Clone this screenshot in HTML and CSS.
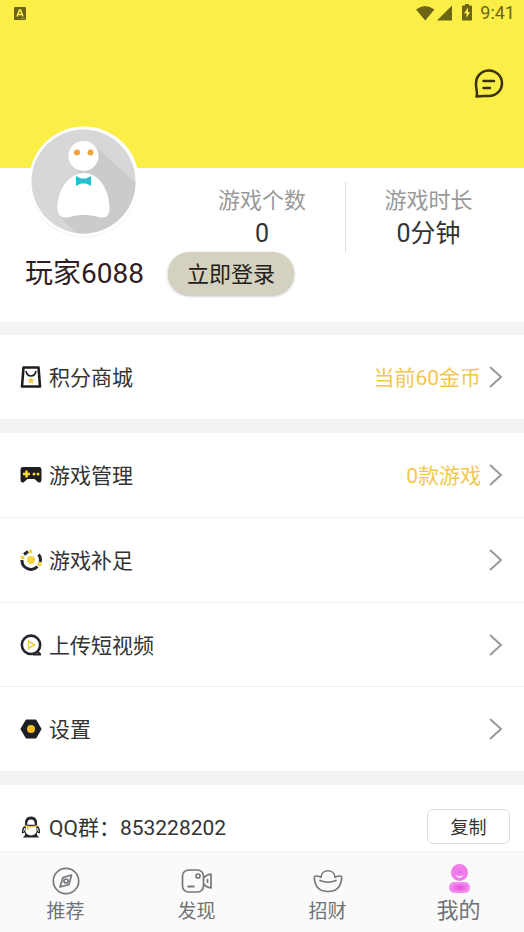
FILE: index.html
```html
<!DOCTYPE html>
<html lang="zh-CN">
<head>
<meta charset="utf-8">
<meta name="viewport" content="width=device-width, initial-scale=1">
<title>我的</title>
<link rel="stylesheet" href="styles.css">
</head>
<body>
<div class="app">
  <header class="hero">
    <div class="status">
      <svg class="status-app" viewBox="0 0 12 13" aria-hidden="true"><rect width="12" height="13" rx="1" fill="#6c6514"/><path d="M3 9.500 5.500 3h1L9 9.500M4 7.500h4" fill="none" stroke="#faee48" stroke-width="1.500"/><path d="M7 11.500h4" stroke="#a0962a"/></svg>
      <div class="status-right">
        <svg width="62" height="20" viewBox="0 0 62 20" aria-hidden="true">
          <g fill="#6c6514"><path d="M2 6.500Q11 -.500 20.500 6.500L11.200 17.500Z"/><path d="M38 2.500V17.500H23Z"/><path d="M49 2.500h2V1h4v1.500h2q1 0 1 1v13q0 1-1 1h-8q-1 0-1-1v-13q0-1 1-1Z"/></g>
          <path d="M54 4.500 50 10.500H52.500V15L56 9H54Z" fill="#faee48"/>
        </svg>
        <span>9:41</span>
      </div>
    </div>
    <button class="message" aria-label="消息">
      <svg width="30" height="30" viewBox="0 0 30 30" fill="none" stroke="#3b3009" stroke-width="2.500" stroke-linecap="round" stroke-linejoin="round"><path d="M2.500 27.500C4 24 2 21 2 15A13 12.800 0 1 1 15 27C11 27 8 26.500 2.500 27.500Z"/><path d="M9.500 12H20M9.500 19H16"/></svg>
    </button>
  </header>

  <section class="profile">
    <div class="profile-top">
      <svg class="avatar" viewBox="0 0 110 112" role="img" aria-label="头像">
        <defs><clipPath id="face"><circle cx="54.500" cy="55.500" r="52"/></clipPath></defs>
        <circle cx="55" cy="56.500" r="55" fill="#f8f1e4"/>
        <circle cx="55" cy="55.500" r="55" fill="#fff"/>
        <g clip-path="url(#face)">
          <path fill="#d7d7d7" d="M0 0h110v112H0z"/>
          <path fill="#cbcbcb" d="m66 20 50 45v55H58L30 89 60 60 45 40Z"/>
        </g>
        <g fill="#fff"><circle cx="54.500" cy="30" r="15"/><path d="M55 47C68 47 80 61 80.500 81Q81 91 74 91.500C70 92 66 89 55 89S40 92 35.500 91.500Q28 91 28.500 81C29 61 42 47 55 47Z"/></g>
        <g fill="#efa43c"><circle cx="48" cy="26.500" r="3"/><circle cx="61.500" cy="26.500" r="3"/></g>
        <path fill="#25bfd0" d="m47 50 5 2.500h5l5-2.500v10l-5-2.500h-5L47 60Z"/>
      </svg>
      <dl class="stats">
        <div class="stat"><dt>游戏个数</dt><dd>0</dd></div>
        <div class="stat"><dt>游戏时长</dt><dd>0分钟</dd></div>
      </dl>
    </div>
    <div class="account">
      <h1 class="name">玩家6088</h1>
      <button class="login">立即登录</button>
    </div>
  </section>

  <main class="menu">
    <section class="group">
      <a class="row" href="#shop">
        <svg class="icon" viewBox="0 0 22 22" aria-hidden="true"><path d="M3.500 1.500h15l1.500 19H2Z" fill="#fff" stroke="#1e1e20" stroke-width="2.600" stroke-linejoin="round"/><path d="M6 5q1 5 5 5t5-5" fill="none" stroke="#1e1e20" stroke-width="1.600"/><path d="m11 11 1 2.200 2.500.300-1.800 1.700.500 2.500-2.200-1.200-2.200 1.200.500-2.500L7.500 13.500l2.500-.300Z" fill="#f3c83c"/></svg>
        <span class="label">积分商城</span><span class="value">当前60金币</span>
        <svg class="chevron" viewBox="0 0 14 22" aria-hidden="true"><path d="M1 1 12 11 1 21"/></svg>
      </a>
    </section>

    <nav class="group group-long" aria-label="功能">
      <a class="row" href="#manage">
        <svg class="icon" viewBox="0 0 22 22" aria-hidden="true"><path d="M3 3h16q2.500 0 2.500 3v10q0 3-3 2.500L14.500 15h-7l-4 3.500Q.500 19 .500 16V6q0-3 2.500-3Z" fill="#1e1e20"/><path d="M6.500 6.500v7M3 10h7" stroke="#f5d939" stroke-width="2.500"/><g fill="#f5d939"><circle cx="14" cy="10" r="1.500"/><circle cx="18" cy="10" r="1.500"/></g></svg>
        <span class="label">游戏管理</span><span class="value">0款游戏</span>
        <svg class="chevron" viewBox="0 0 14 22" aria-hidden="true"><path d="M1 1 12 11 1 21"/></svg>
      </a>
      <a class="row" href="#refill">
        <svg class="icon" viewBox="0 0 22 22" aria-hidden="true"><circle cx="11" cy="11" r="4" fill="#f3d53b"/><g fill="none" stroke="#24252f" stroke-width="3"><path d="M4 5.500 8 2.500M2 11a9 9 0 0 0 15.500 6.500M20 13Q21.500 9 18.500 5.500"/></g><g fill="#f3d53b"><circle cx="10.500" cy="2.500" r="2"/><circle cx="2.500" cy="8.500" r="2"/><circle cx="19.500" cy="15" r="2.200"/></g></svg>
        <span class="label">游戏补足</span>
        <svg class="chevron" viewBox="0 0 14 22" aria-hidden="true"><path d="M1 1 12 11 1 21"/></svg>
      </a>
      <a class="row" href="#upload">
        <svg class="icon" viewBox="0 0 22 22" aria-hidden="true"><g fill="none" stroke="#24252f" stroke-width="2.600"><circle cx="11" cy="10.800" r="9.200"/><path d="M13 20.500h8M17.500 17.500l2.500 2.500" stroke-width="2"/></g><path d="m8.500 7 6 3.700-6 3.800Z" fill="#fff" stroke="#ecd143" stroke-width="1.600"/></svg>
        <span class="label">上传短视频</span>
        <svg class="chevron" viewBox="0 0 14 22" aria-hidden="true"><path d="M1 1 12 11 1 21"/></svg>
      </a>
      <a class="row" href="#settings">
        <svg class="icon" viewBox="0 0 22 22" aria-hidden="true"><path d="M6.500 2.500h9l5 8.500-5 8.500h-9L1.500 11Z" fill="#1b2027" stroke="#1b2027" stroke-width="2" stroke-linejoin="round"/><circle cx="11" cy="11" r="4" fill="#f9bd26"/></svg>
        <span class="label">设置</span>
        <svg class="chevron" viewBox="0 0 14 22" aria-hidden="true"><path d="M1 1 12 11 1 21"/></svg>
      </a>
    </nav>

    <section class="contact">
      <svg class="icon" viewBox="0 0 22 22" aria-hidden="true"><path d="M5 9Q4 .500 11 .500T17 9Q21 13 20 17.500L17 16.500V19l2 2.500H3L5 19V16.500L2 17.500Q1 13 5 9Z" fill="#24252a"/><path d="M7.200 8.800Q7 3.500 11 3.500t3.800 5.300Z" fill="#fff"/><path d="M6 11h10q2.500 8-5 8.500Q3.500 19 6 11Z" fill="#fff"/><path d="M3.500 15.500 5 12M18.500 15.500 17 12" stroke="#fff"/><path d="M4 9.500q7 2.500 14 0M8 10.500V14" fill="none" stroke="#edc953" stroke-width="1.600"/></svg>
      <span class="label">QQ群：853228202</span>
      <button class="copy">复制</button>
    </section>
  </main>

  <nav class="tabs" aria-label="主导航">
    <a class="tab" href="#recommend">
      <svg width="32" height="30" viewBox="0 0 32 30" fill="none" stroke="#74777b" stroke-width="1.700" stroke-linejoin="round"><circle cx="16" cy="15" r="12.700"/><path d="m13 11.500 8.500-2.500-2.500 9.500-9 2.500Z"/><circle cx="16" cy="15" r="2"/></svg>
      <span>推荐</span>
    </a>
    <a class="tab" href="#discover">
      <svg width="32" height="30" viewBox="0 0 32 30" fill="none" stroke="#74777b" stroke-width="1.700" stroke-linejoin="round"><rect x="1.500" y="4" width="21" height="22" rx="6"/><path d="M22.500 12q3-3.500 7.500-4v14q-4.500-.500-7.500-4M26.500 13v4"/><circle cx="17" cy="10" r="2"/><path d="M6.500 20.500h7" stroke-width="2"/></svg>
      <span>发现</span>
    </a>
    <a class="tab" href="#wealth">
      <svg width="32" height="30" viewBox="0 0 32 30" fill="none" stroke="#74777b" stroke-width="1.700" stroke-linecap="round" stroke-linejoin="round"><path d="M9 11C5.500 10 2 9 2.300 12 3 21 7 25.500 16 25.500S29 21 29.700 12C30 9 26.500 10 23 11M9 11.500C9.500 2.500 22.500 2.500 23 11.500M8 14.500q8 3.500 16 0"/></svg>
      <span>招财</span>
    </a>
    <a class="tab tab-active" href="#me" aria-current="page">
      <svg width="32" height="32" viewBox="0 0 32 32"><defs><radialGradient id="body"><stop offset="0" stop-color="#ee48e4"/><stop offset="1" stop-color="#f295ee"/></radialGradient></defs><circle cx="16.500" cy="10.500" r="8.500" fill="#f07be9"/><path d="M12.500 12.500q4 3 8 0-1 3.500-4 3.500t-4-3.500Z" fill="#fbd8fa"/><path d="M15 10h3" stroke="#b57ad8"/><rect x="6" y="20" width="21" height="11" rx="5" fill="url(#body)"/></svg>
      <span>我的</span>
    </a>
  </nav>
</div>
</body>
</html>
```
FILE: styles.css
```css
* {
  box-sizing: border-box;
}

body {
  margin: 0;
  background: #fff;
  color: #333;
  font-family: Roboto, "Noto Sans CJK SC", sans-serif;
}

a {
  color: inherit;
  text-decoration: none;
}

button {
  padding: 0;
  border: 0;
  background: none;
  font: inherit;
  cursor: pointer;
}

svg {
  display: block;
  flex: none;
}

.app {
  display: flex;
  flex-direction: column;
  min-height: 100vh;
}

.hero {
  display: flex;
  flex-direction: column;
  height: 168px;
  background: #fbee47;
}

.status {
  display: flex;
  align-items: center;
  justify-content: space-between;
  height: 26px;
  padding: 0 9px 0 14px;
}

.status-app {
  width: 12px;
  height: 13px;
}

.status-right {
  display: flex;
  align-items: center;
  gap: 4px;
  color: #6c6514;
  font-size: 18px;
  line-height: 26px;
}

.message {
  align-self: flex-end;
  margin: 43px 20px 0 0;
}

.profile {
  height: 154px;
}

.profile-top {
  display: flex;
  justify-content: space-between;
  gap: 40px;
  height: 84px;
  padding: 14px 13px 0 29px;
}

.avatar {
  width: 110px;
  height: 112px;
  margin-top: -56px;
}

.stats {
  display: grid;
  flex: 1;
  grid-template-columns: 1fr 1fr;
  height: 70px;
  margin: 0;
  text-align: center;
}

.stat + .stat {
  border-left: 1px solid #dedede;
}

.stat dt {
  color: #999;
  font-size: 22px;
  line-height: 38px;
}

.stat dd {
  margin: 0;
  font-size: 25px;
  line-height: 28px;
}

.account {
  display: flex;
  align-items: center;
  gap: 24px;
  padding-left: 25px;
}

.name {
  margin: 0;
  color: #301c22;
  font-size: 28px;
  font-weight: 400;
  line-height: 40px;
}

.login {
  width: 126px;
  height: 43px;
  padding-bottom: 3px;
  border-radius: 22px;
  background: #d4d1c0;
  box-shadow: 0 1px 3px rgb(0 0 0 / 30%);
  color: #222018;
  font-size: 22px;
}

.menu {
  display: grid;
  gap: 14px;
  padding-top: 13px;
  background: #f1f3f5;
}

.group,
.contact {
  background: #fff;
}

.group-long {
  display: flex;
  flex-direction: column;
  min-height: 338px;
}

.row {
  display: flex;
  flex: 1;
  align-items: center;
  min-height: 84px;
  padding: 0 21px 0 20px;
  font-size: 21px;
}

.row + .row {
  border-top: 1px solid #f0f0f0;
}

.icon {
  width: 22px;
  height: 22px;
  margin-right: 7px;
}

.label {
  flex: 1;
}

.label,
.value {
  padding-bottom: 2px;
}

.value {
  color: #f3c74d;
}

.chevron {
  width: 14px;
  height: 22px;
  margin-left: 8px;
  fill: none;
  stroke: #999;
  stroke-width: 2;
}

.contact {
  display: flex;
  align-items: center;
  padding: 24px 14px 7px 20px;
  font-size: 21px;
}

.copy {
  width: 83px;
  height: 35px;
  padding-bottom: 2px;
  border: 1px solid #ddd;
  border-radius: 6px;
  background: #fff;
  color: #333;
  font-size: 18px;
}

.tabs {
  display: grid;
  grid-template-columns: repeat(4, 1fr);
  height: 82px;
  margin-top: auto;
  border-top: 1px solid #f5f5f5;
  background: #fafafa;
}

.tab {
  display: flex;
  flex-direction: column;
  align-items: center;
  padding-top: 14px;
  color: #6f7276;
  font-size: 19px;
  line-height: 31px;
}

.tab-active {
  padding-top: 10px;
  font-size: 22px;
  line-height: 34px;
}
```
